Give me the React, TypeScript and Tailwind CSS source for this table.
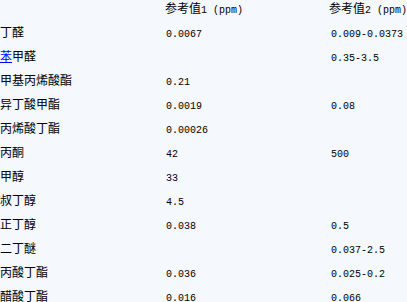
import React from 'react';

type Row = { name: React.ReactNode; v1: string; v2: string };

const rows: Row[] = [
    { name: '丁醛', v1: '0.0067', v2: '0.009-0.0373' },
    {
        name: (
            <>
                <a href="#" className="text-[#0000ff] underline">苯</a>甲醛
            </>
        ),
        v1: '',
        v2: '0.35-3.5',
    },
    { name: '甲基丙烯酸酯', v1: '0.21', v2: '' },
    { name: '异丁酸甲酯', v1: '0.0019', v2: '0.08' },
    { name: '丙烯酸丁酯', v1: '0.00026', v2: '' },
    { name: '丙酮', v1: '42', v2: '500' },
    { name: '甲醇', v1: '33', v2: '' },
    { name: '叔丁醇', v1: '4.5', v2: '' },
    { name: '正丁醇', v1: '0.038', v2: '0.5' },
    { name: '二丁醚', v1: '', v2: '0.037-2.5' },
    { name: '丙酸丁酯', v1: '0.036', v2: '0.025-0.2' },
    { name: '醋酸丁酯', v1: '0.016', v2: '0.066' },
];

const cjk = "font-['Noto_Sans_CJK_SC',sans-serif] text-[12px]";
const mono = "font-['Liberation_Mono',monospace] text-[10px]";

const Num: React.FC<{ value: string }> = ({ value }) => (
    <span className={mono}>{value}</span>
);

const App: React.FC = () => {
    return (
        <div className="min-h-screen w-[407px] h-[302px] overflow-hidden bg-[#f5f8fd] text-black">
            <div className="flex h-6 leading-[15px]">
                <div className="w-[166px]" />
                <div className={`w-[165px] ${cjk}`}>
                    参考值<Num value="1 (ppm)" />
                </div>
                <div className={`flex-1 whitespace-nowrap ${cjk}`}>
                    参考值<Num value="2 (ppm)" />
                </div>
            </div>
            {rows.map((row, i) => (
                <div key={i} className="flex h-6 leading-[15px]">
                    <div className={`w-[166px] ${cjk}`}>{row.name}</div>
                    <div className="w-[165px]">
                        <Num value={row.v1} />
                    </div>
                    <div className="flex-1 whitespace-nowrap">
                        <Num value={row.v2} />
                    </div>
                </div>
            ))}
        </div>
    );
};

export default App;
